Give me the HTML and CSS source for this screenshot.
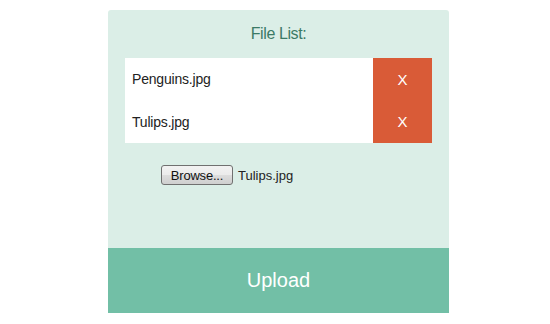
FILE: index.html
```html
<!DOCTYPE html>
<html lang="en">
<head>
<meta charset="utf-8">
<title>File List</title>
<link rel="stylesheet" href="styles.css">
</head>
<body>
<div class="panel">
  <div class="title">File List:</div>
  <div class="list">
    <div class="row">
      <span class="name">Penguins.jpg</span>
      <span class="remove">X</span>
    </div>
    <div class="row">
      <span class="name">Tulips.jpg</span>
      <span class="remove">X</span>
    </div>
  </div>
  <div class="picker">
    <button class="browse" type="button">Browse...</button>
    <span class="chosen">Tulips.jpg</span>
  </div>
  <div class="upload">Upload</div>
</div>
</body>
</html>
```

FILE: styles.css
```css
html, body {
  margin: 0;
  padding: 0;
  background: #ffffff;
}

body {
  font-family: "Liberation Sans", Arial, sans-serif;
  width: 550px;
  height: 324px;
  overflow: hidden;
}

.panel {
  margin: 10px 0 0 108px;
  width: 341px;
  height: 303px;
  background: #dbeee7;
  border-radius: 3px 3px 0 0;
  display: flex;
  flex-direction: column;
}

.title {
  height: 48px;
  line-height: 48px;
  text-align: center;
  font-size: 16px;
  letter-spacing: -0.4px;
  color: #3b7a66;
}

.list {
  margin: 0 17px;
  background: #ffffff;
  display: flex;
  flex-direction: column;
}

.row {
  height: 42.5px;
  display: flex;
  align-items: stretch;
}

.name {
  flex: 1;
  display: flex;
  align-items: center;
  padding-left: 7px;
  font-size: 14px;
  letter-spacing: -0.2px;
  color: #222222;
}

.remove {
  width: 59px;
  background: #d95b37;
  color: #ffffff;
  font-size: 15px;
  display: flex;
  align-items: center;
  justify-content: center;
}

.picker {
  display: flex;
  align-items: center;
  gap: 5px;
  margin: 22px 0 0 53px;
  height: 20px;
}

.browse {
  width: 72px;
  height: 20px;
  padding: 0;
  font-family: "Liberation Sans", Arial, sans-serif;
  font-size: 13px;
  letter-spacing: -0.2px;
  color: #111111;
  border: 1px solid #707070;
  border-radius: 3px;
  background: linear-gradient(#f2f2f2 0%, #ebebeb 50%, #dddddd 51%, #cfcfcf 100%);
}

.chosen {
  font-size: 13px;
  color: #222222;
}

.upload {
  margin-top: auto;
  height: 65px;
  background: #72bfa6;
  color: #ffffff;
  font-size: 20px;
  display: flex;
  align-items: center;
  justify-content: center;
}
```
